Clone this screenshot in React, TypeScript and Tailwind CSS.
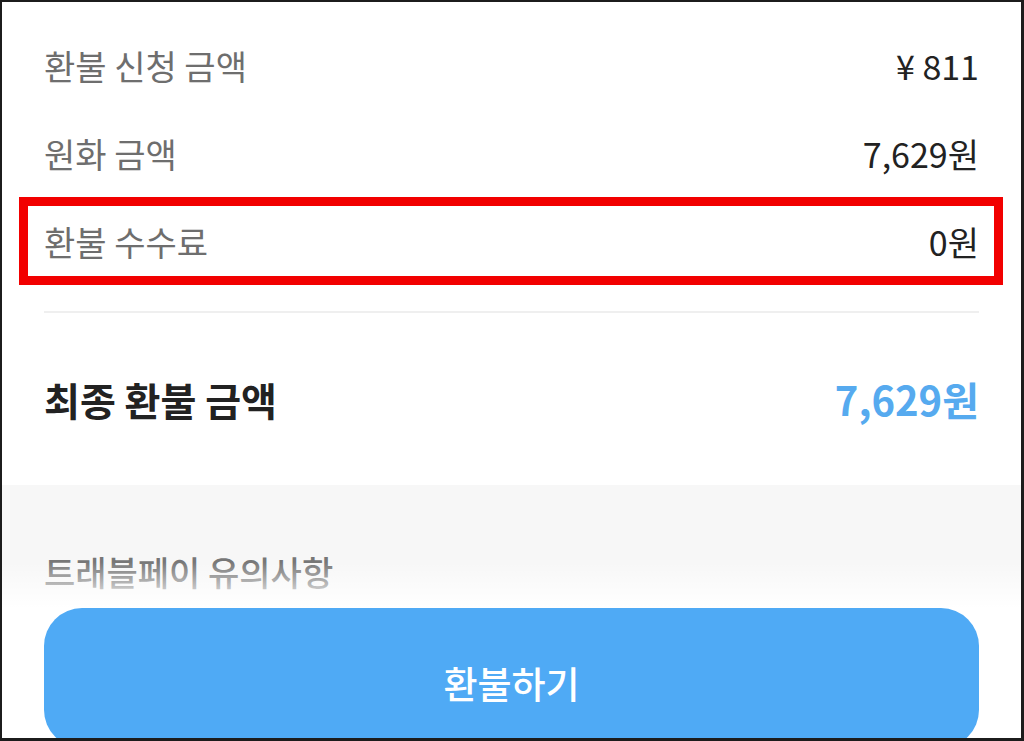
const rows = [
  { label: "환불 신청 금액", value: "¥ 811" },
  { label: "원화 금액", value: "7,629원" },
]

export default function App() {
  return (
    <div
      className="relative w-[1024px] h-[741px] overflow-hidden bg-white border-2 border-b-[3px] border-r-[3px] border-[#1c1c1c]"
      style={{ fontFamily: '"Noto Sans CJK KR", "Noto Sans", sans-serif' }}
    >
      <div className="px-[42px] pt-[19px]">
        {rows.map((row) => (
          <div key={row.label} className="flex h-[88px] items-center justify-between">
            <span className="text-[34px] text-[#6e6e6e]">{row.label}</span>
            <span className="text-[34px] text-[#222]">{row.value}</span>
          </div>
        ))}

        {/* highlighted fee row */}
        <div className="relative flex h-[88px] items-center justify-between">
          <span className="text-[34px] text-[#6e6e6e]">환불 수수료</span>
          <span className="text-[34px] text-[#222]">0원</span>
          <div className="pointer-events-none absolute -left-[25px] -right-[24px] top-0 bottom-0 border-[9px] border-[#f20000]" />
        </div>

        <div className="mt-[26px] h-[2px] bg-[#efefef]" />

        <div className="flex h-[172px] items-center justify-between">
          <span className="text-[39px] font-bold text-[#222]">최종 환불 금액</span>
          <span className="text-[40px] font-bold text-[#56aaef]">7,629원</span>
        </div>
      </div>

      <div className="h-full bg-[#f7f7f7] px-[42px] pt-[64px]">
        <div className="text-[34px] font-medium leading-[46px] text-[#777]">트래블페이 유의사항</div>
      </div>

      {/* bottom fade behind the fixed button */}
      <div className="absolute left-0 right-0 top-[560px] bottom-0 flex flex-col">
        <div className="h-[46px] shrink-0 bg-gradient-to-b from-white/0 to-white" />
        <div className="flex-1 bg-white px-[42px]">
          <button className="flex h-[140px] w-full shrink-0 items-start justify-center rounded-[38px] bg-[#4faaf5] pt-[51px] text-[37px] font-medium leading-[48px] text-white">
            환불하기
          </button>
        </div>
      </div>
    </div>
  )
}
